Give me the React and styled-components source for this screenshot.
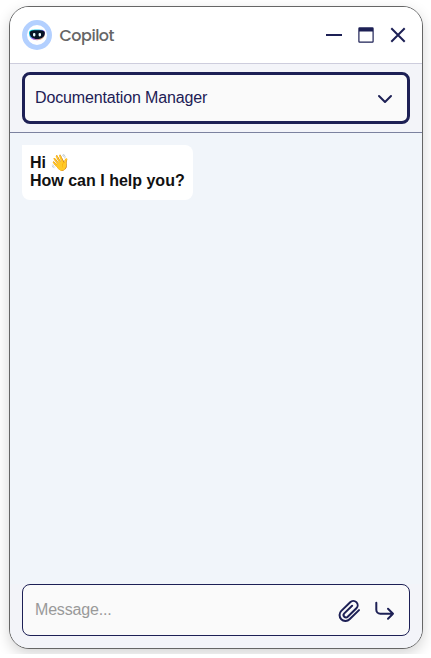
import React from "react";
import styled, { createGlobalStyle } from "styled-components";

const navy = "#1d2055";

const GlobalStyle = createGlobalStyle`
  * { box-sizing: border-box; }
  html { background: #fff; }
  body { margin: 0; font-family: "Liberation Sans", Arial, sans-serif; }
`;

const Page = styled.main`
  width: 431px;
  height: 654px;
  padding: 6px 8px 5px 9px;
  overflow: hidden;
  background: #fff;
`;

const ChatWindow = styled.section`
  display: flex;
  flex-direction: column;
  width: 414px;
  height: 643px;
  border: 1px solid #666;
  border-radius: 20px;
  overflow: hidden;
  background: #f1f5fa;
  box-shadow: 0 5px 14px rgba(0, 0, 0, 0.17);
`;

const Header = styled.header`
  display: flex;
  align-items: center;
  flex: 0 0 57px;
  padding: 0 16px 0 12px;
  background: #fff;
  border-bottom: 1px solid #cdcddd;
`;

const Title = styled.h1`
  flex: 1;
  margin: 1px 0 0 7.5px;
  color: #666;
  font: 500 16px/24px Poppins, Inter, sans-serif;
  letter-spacing: -0.5px;
`;

const Controls = styled.div`
  display: flex;
  gap: 16px;
`;

const IconButton = styled.button`
  display: flex;
  padding: 0;
  border: 0;
  background: none;
  color: ${navy};
`;

const SelectBar = styled.div`
  flex: 0 0 69px;
  padding: 8px 12px;
  background: #f3f4f9;
  border-bottom: 1px solid #7c829f;
`;

const Select = styled.div`
  display: flex;
  align-items: center;
  justify-content: space-between;
  height: 52px;
  padding: 0 10px;
  border: 3px solid ${navy};
  border-radius: 8px;
  background: #fafafa;
  color: ${navy};
  font-size: 16px;
  line-height: 18px;
  letter-spacing: -0.14px;
`;

const SelectLabel = styled.span`
  margin-top: -1px;
`;

const Messages = styled.div`
  flex: 1;
  padding: 12px;
`;

const Bubble = styled.p`
  width: 171px;
  height: 55px;
  margin: 0;
  padding: 9px 8px 8px;
  border-radius: 0 8px 8px 8px;
  background: #fff;
  color: #111;
  font-size: 16px;
  font-weight: 700;
  line-height: 18px;
  white-space: nowrap;
`;

const Footer = styled.footer`
  padding: 0 12px 12px;
  background: #f3f4f9;
`;

const Composer = styled.label`
  display: flex;
  align-items: center;
  height: 52px;
  padding: 0 12px;
  border: 1px solid ${navy};
  border-radius: 8px;
  background: #fafafa;
`;

const MessageInput = styled.input`
  flex: 1;
  min-width: 0;
  margin-top: -1px;
  padding: 0;
  border: 0;
  outline: 0;
  background: none;
  font: 16px/18px "Liberation Sans", Arial, sans-serif;
  letter-spacing: -0.18px;
  &::placeholder { color: #999; opacity: 1; }
`;

const Actions = styled.div`
  display: flex;
  gap: 12px;
`;

const BotLogo = () => (
  <svg width="30" height="30" viewBox="0 0 30 30">
    <defs>
      <linearGradient id="glow" x1="0" y1="0" x2="1" y2="1">
        <stop offset="0" stopColor="#00e5d0" />
        <stop offset=".35" stopColor="#27b8f5" />
        <stop offset=".55" stopColor="#a15cf0" />
        <stop offset="1" stopColor="#ffd84a" />
      </linearGradient>
    </defs>
    <circle cx="15" cy="15" r="12.5" fill="#fff" stroke="#b3d0ff" strokeWidth="5" />
    <path d="M7 13c0-3 2-3.6 8-3.6s8 .6 8 3.6c0 4.4-2.8 7.2-8 7.2S7 17.4 7 13Z" fill="url(#glow)" />
    <path d="M7.8 13c0-2.2 2-2.7 7.4-2.7s7.6.5 7.6 2.7c0 3.6-2.6 6-7.5 6s-7.5-2.4-7.5-6Z" fill="#071326" />
    <rect x="11" y="13" width="2.4" height="3.4" rx="1.1" fill="#eafcff" />
    <rect x="16.6" y="13" width="2.4" height="3.4" rx="1.1" fill="#eafcff" />
  </svg>
);

const strokeProps = {
  fill: "none",
  stroke: "currentColor",
  strokeWidth: 2,
  strokeLinecap: "round",
  strokeLinejoin: "round",
};

export default function App() {
  return (
    <>
      <GlobalStyle />
      <Page>
        <ChatWindow>
          <Header>
            <BotLogo />
            <Title>Copilot</Title>
            <Controls>
              <IconButton aria-label="Minimize">
                <svg width="16" height="16" {...strokeProps} strokeLinecap="butt"><path d="M0 8h16" /></svg>
              </IconButton>
              <IconButton aria-label="Maximize">
                <svg width="16" height="16" fill="currentColor">
                  <path fillRule="evenodd" d="M1.5.3h13A1.2 1.2 0 0 1 15.7 1.5v13a1.2 1.2 0 0 1-1.2 1.2h-13A1.2 1.2 0 0 1 .3 14.5v-13A1.2 1.2 0 0 1 1.5.3ZM1.5 4.6v9.9h13V4.6Z" />
                </svg>
              </IconButton>
              <IconButton aria-label="Close">
                <svg width="16" height="16" {...strokeProps} strokeLinecap="butt"><path d="m1.3 1.3 13.4 13.4M14.7 1.3 1.3 14.7" /></svg>
              </IconButton>
            </Controls>
          </Header>
          <SelectBar>
            <Select>
              <SelectLabel>Documentation Manager</SelectLabel>
              <svg width="24" height="24" {...strokeProps}><path d="m6 10 6 6 6-6" /></svg>
            </Select>
          </SelectBar>
          <Messages>
            <Bubble>Hi 👋<br />How can I help you?</Bubble>
          </Messages>
          <Footer>
            <Composer>
              <MessageInput placeholder="Message..." aria-label="Message" />
              <Actions>
                <IconButton aria-label="Attach file">
                  <svg width="24" height="24" viewBox="0 0 24 24" {...strokeProps}>
                    <path d="m22 11.3-9.4 9.2a5.9 5.9 0 0 1-8.3-8.4l8.9-8.7a4.3 4.3 0 0 1 6.2 6.1l-8.7 8.5a2.4 2.4 0 0 1-3.4-3.4l7.8-7.6" transform="translate(0 .8)" />
                  </svg>
                </IconButton>
                <IconButton aria-label="Send">
                  <svg width="24" height="24" viewBox="0 0 24 24" {...strokeProps}>
                    <path d="M3.3 4.8v6.9a4 4 0 0 0 4 4H20M15 10.7l5 5-5 5" />
                  </svg>
                </IconButton>
              </Actions>
            </Composer>
          </Footer>
        </ChatWindow>
      </Page>
    </>
  );
}
